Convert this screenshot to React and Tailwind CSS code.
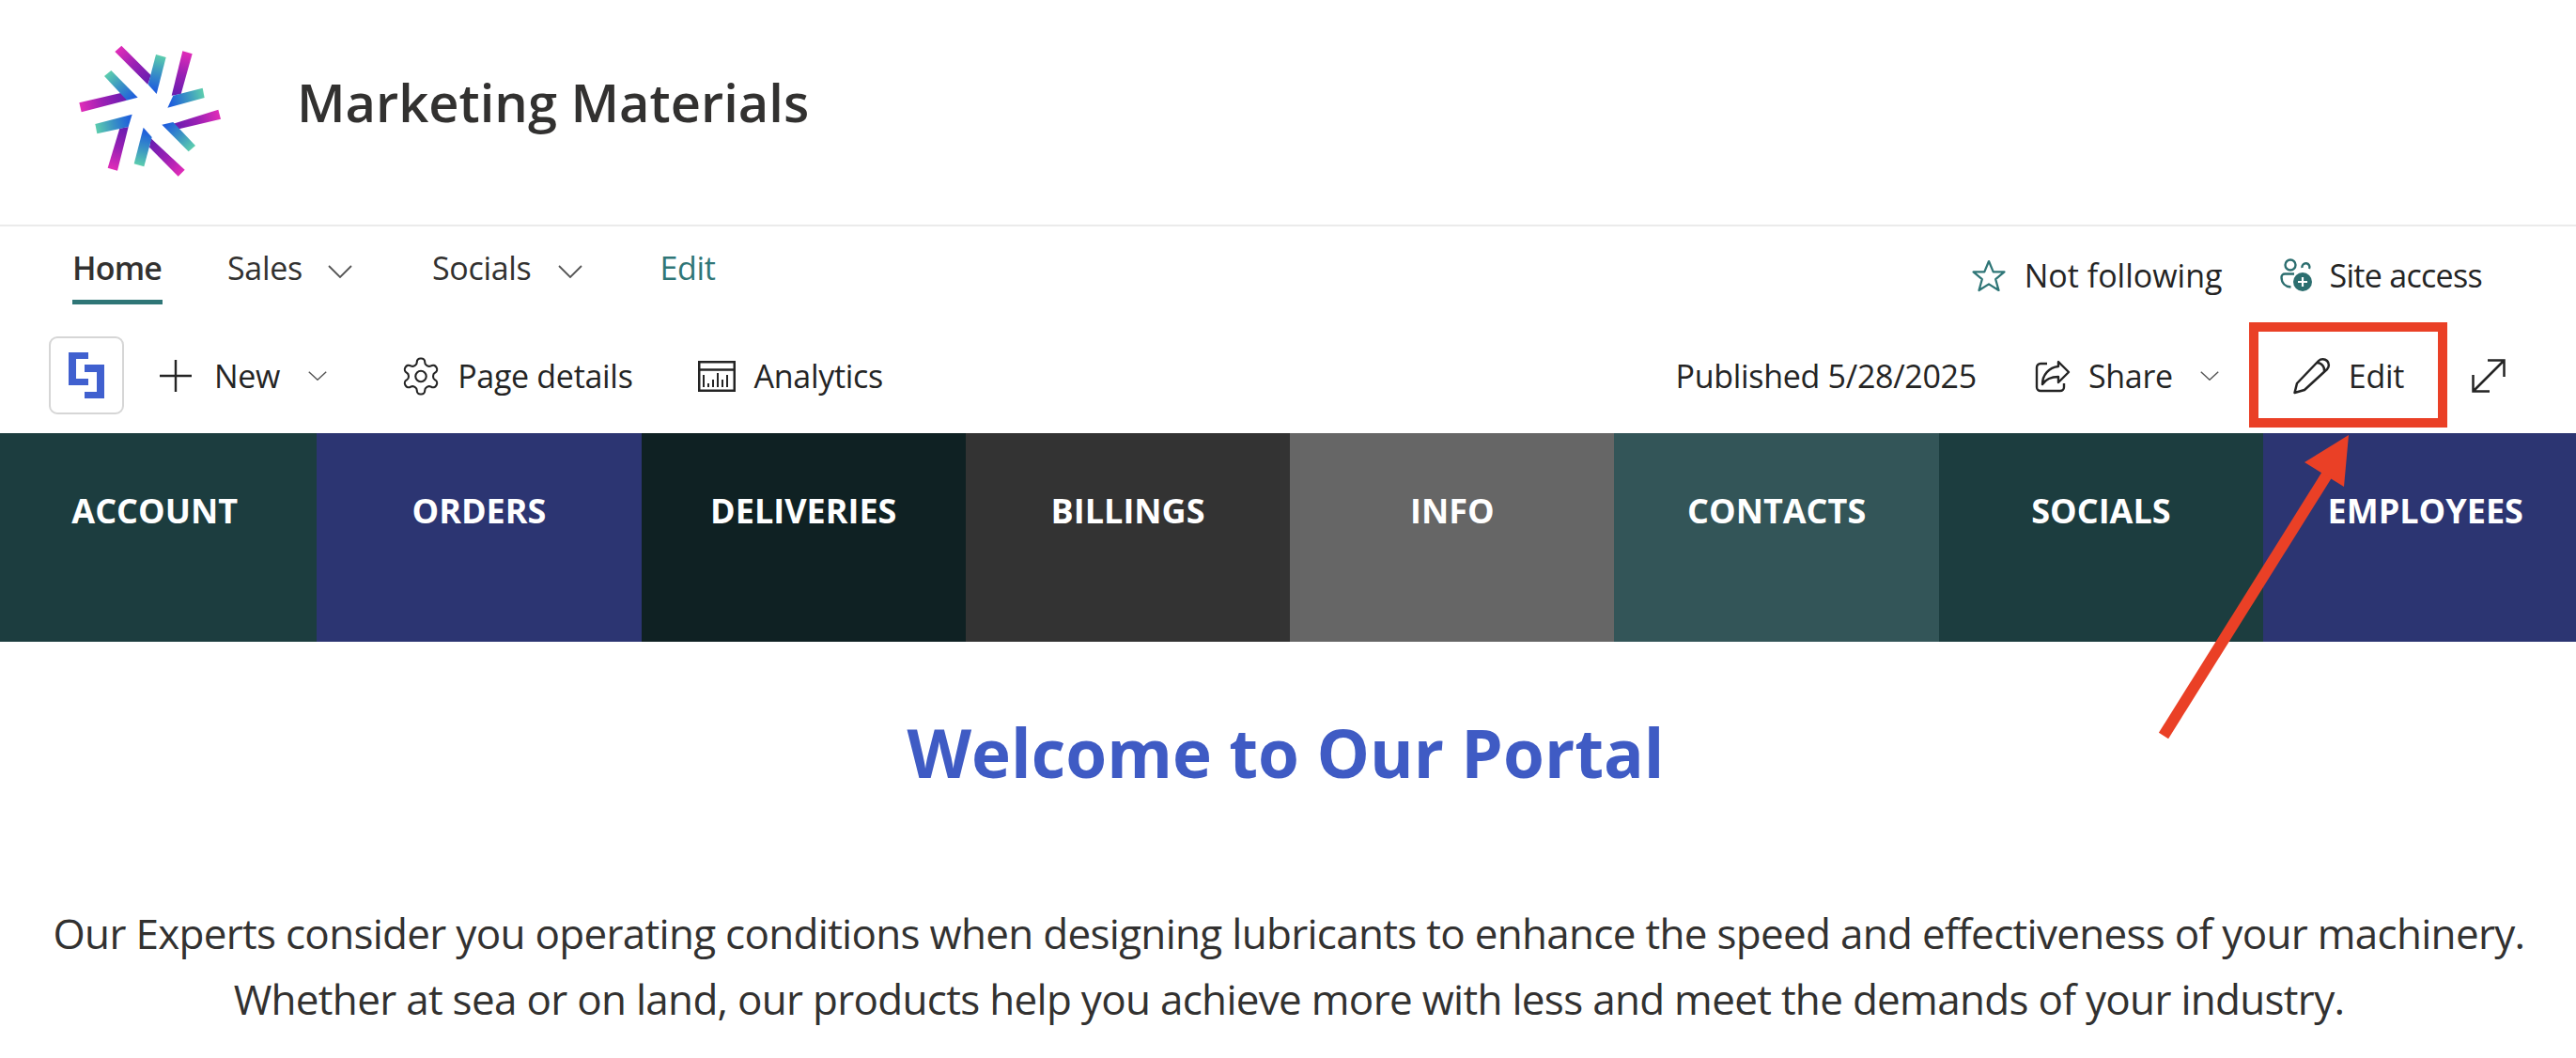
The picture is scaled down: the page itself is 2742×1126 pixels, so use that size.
import React from "react";

const bars = [
  ["a", [[247,105],[268,86],[362,180],[352,210]]],
  ["a", [[463,103],[494,112],[458,240],[428,245]]],
  ["a", [[577,290],[585,320],[445,353],[433,335]]],
  ["a", [[470,482],[449,503],[357,410],[362,382]]],
  ["a", [[224,476],[255,485],[290,345],[262,350]]],
  ["a", [[133,268],[140,298],[285,260],[275,235]]],
  ["b", [[378,114],[410,123],[380,240],[353,210]]],
  ["b", [[527,221],[533,252],[415,284],[433,245]]],
  ["b", [[504,405],[482,424],[397,338],[433,330]]],
  ["b", [[340,472],[308,463],[338,347],[365,378]]],
  ["b", [[190,367],[184,336],[302,305],[290,345]]],
  ["b", [[213,183],[235,165],[320,251],[285,260]]],
];

function Logo() {
  return (
    <svg width="200" height="190" viewBox="0 0 600 570">
      <defs>
        {bars.map(([k, p], i) => (
          <linearGradient key={i} id={`g${i}`} gradientUnits="userSpaceOnUse"
            x1={(p[0][0] + p[1][0]) / 2} y1={(p[0][1] + p[1][1]) / 2}
            x2={(p[2][0] + p[3][0]) / 2} y2={(p[2][1] + p[3][1]) / 2}>
            <stop offset="0" stopColor={k === "a" ? "#e02cb8" : "#5ccdae"} />
            <stop offset="0.5" stopColor={k === "a" ? "#9a20b4" : "#3a93c4"} />
            <stop offset="1" stopColor={k === "a" ? "#6a1db0" : "#1f5fdc"} />
          </linearGradient>
        ))}
      </defs>
      {bars.map(([k, p], i) => (
        <polygon key={i} points={p.map((q) => q.join(",")).join(" ")} fill={`url(#g${i})`} />
      ))}
    </svg>
  );
}

const Chevron = ({ w = 26, h = 14, c = "#555" }) => (
  <svg width={w} height={h} viewBox="0 0 26 14" fill="none" stroke={c} strokeWidth="1.8" preserveAspectRatio="none">
    <path d="M1 1l12 12L25 1" />
  </svg>
);

const Star = () => (
  <svg width="38" height="35" viewBox="0 0 36 34" fill="none" stroke="#2f7677" strokeWidth="2.2" strokeLinejoin="round">
    <path d="M18 2l4.600 11h11.400l-9 7.600 3.200 11.400L18 25.600 7.800 32 11 20.600 2 13h11.400z" />
  </svg>
);

const SiteAccess = () => (
  <svg width="38" height="36" viewBox="0 0 38 36" fill="none" stroke="#2c6e6f" strokeWidth="2.4">
    <circle cx="12" cy="7" r="5.500" />
    <path d="M24.500 10a4 4 0 1 1 7.500 1" />
    <path d="M16 16.500H6a3.500 3.500 0 0 0-3.500 3.500c0 6 4 10 10 10.500" />
    <circle cx="25" cy="25" r="10" fill="#2c6e6f" stroke="none" />
    <path d="M25 20v10M20 25h10" stroke="#fff" strokeWidth="2.2" />
  </svg>
);

const Plus = () => (
  <svg width="34" height="34" viewBox="0 0 34 34" stroke="#242424" strokeWidth="2.4">
    <path d="M17 0v34M0 17h34" />
  </svg>
);

const Gear = () => (
  <svg width="40" height="41" viewBox="1.500 1.500 21 21" fill="none" stroke="#242424" strokeWidth="1.1" strokeLinejoin="round">
    <path d="M12.220 2h-.44a2 2 0 0 0-2 2v.18a2 2 0 0 1-1 1.730l-.43.25a2 2 0 0 1-2 0l-.15-.08a2 2 0 0 0-2.730.73l-.22.38a2 2 0 0 0 .73 2.730l.15.1a2 2 0 0 1 1 1.720v.51a2 2 0 0 1-1 1.740l-.15.09a2 2 0 0 0-.73 2.730l.22.38a2 2 0 0 0 2.730.73l.15-.08a2 2 0 0 1 2 0l.43.25a2 2 0 0 1 1 1.730V20a2 2 0 0 0 2 2h.44a2 2 0 0 0 2-2v-.18a2 2 0 0 1 1-1.730l.43-.25a2 2 0 0 1 2 0l.15.08a2 2 0 0 0 2.730-.73l.22-.39a2 2 0 0 0-.73-2.730l-.15-.08a2 2 0 0 1-1-1.740v-.5a2 2 0 0 1 1-1.740l.15-.09a2 2 0 0 0 .73-2.730l-.22-.38a2 2 0 0 0-2.730-.73l-.15.08a2 2 0 0 1-2 0l-.43-.25a2 2 0 0 1-1-1.730V4a2 2 0 0 0-2-2z" />
    <circle cx="12" cy="12" r="3" />
  </svg>
);

const Analytics = () => (
  <svg width="40" height="33" viewBox="0 0 40 33" fill="none" stroke="#242424">
    <rect x="1.250" y="1.250" width="37.500" height="30.500" strokeWidth="2.500" />
    <path d="M1 9.500h38" strokeWidth="2.500" />
    <path d="M6 28V15M11 28v-4M16 28v-8M21 28V13M26 28v-8M31 28V15" strokeWidth="2" />
  </svg>
);

const Share = () => (
  <svg width="38" height="38" viewBox="0 0 38 38" fill="none" stroke="#242424" strokeWidth="2.4" strokeLinejoin="round">
    <path d="M13 6H6a4 4 0 0 0-4 4v21a4 4 0 0 0 4 4h21a4 4 0 0 0 4-4v-4" />
    <path d="M25 4v5C15 10 8 18 8 28c4-6 10-8 17-8v6l11-11z" />
  </svg>
);

const Pencil = () => (
  <svg width="42" height="40" viewBox="0 0 42 40" fill="none" stroke="#242424" strokeWidth="2.500" strokeLinejoin="round">
    <path d="M1.500 38L4 28 27 4a6 6 0 0 1 9 9L12 35z" />
    <path d="M25 6a8 8 0 0 1 8 9" />
  </svg>
);

const Expand = () => (
  <svg width="36" height="36" viewBox="0 0 36 36" fill="none" stroke="#242424" strokeWidth="2.500">
    <path d="M17 1.500h17.500V19M34.500 1.500l-33 33M1.500 17v17.500H19" />
  </svg>
);

const Tile = () => (
  <div className="w-[80px] h-[83px] rounded-[9px] border-2 border-[#d6d6d6] flex items-center justify-center">
    <svg width="38" height="49" viewBox="0 0 38 49" fill="#4060cf">
      <path d="M0 0h21v7H8v21h13v7H0zM17 13h21v36H17v-7h13V21H17z" />
    </svg>
  </div>
);

const tabs = [
  ["ACCOUNT", "bg-[#1c3d3f]"],
  ["ORDERS", "bg-[#2c3572]"],
  ["DELIVERIES", "bg-[#0f2123]"],
  ["BILLINGS", "bg-[#333333]"],
  ["INFO", "bg-[#666666]"],
  ["CONTACTS", "bg-[#335558]"],
  ["SOCIALS", "bg-[#1c3d3f]"],
  ["EMPLOYEES", "bg-[#2c3572]"],
];

export default function App() {
  return (
    <div className="relative w-[2742px] h-[1126px] overflow-hidden bg-white text-[#242424] font-['Open_Sans',sans-serif]">
      <header className="h-[241px] border-b-2 border-[#ebebeb] flex items-start">
        <div className="ml-[40px] mt-[20px]"><Logo /></div>
        <h1 className="ml-[76px] mt-[68px] text-[56px] leading-[80px] font-semibold text-[#323130]">Marketing Materials</h1>
      </header>

      <nav className="h-[118px] flex items-start text-[34px] tracking-[-0.3px] text-[#323130]">
        <div className="ml-[77px] w-[96px] mt-[19px] h-[64px] border-b-[5px] border-[#2f7677] font-semibold leading-[50px] tracking-[-0.8px] whitespace-nowrap">Home</div>
        <div className="ml-[69px] mt-[19px] leading-[50px]">Sales</div>
        <div className="ml-[27px] mt-[41px]"><Chevron /></div>
        <div className="ml-[85px] mt-[19px] leading-[50px]">Socials</div>
        <div className="ml-[29px] mt-[41px]"><Chevron /></div>
        <div className="ml-[82px] mt-[19px] leading-[50px] text-[#2f7677]">Edit</div>
        <div className="ml-auto mt-[27px] flex items-center leading-[50px] text-[#242424]">
          <Star />
          <span className="ml-[19px] tracking-normal">Not following</span>
          <span className="ml-[61px]"><SiteAccess /></span>
          <span className="ml-[15px] mr-[100px] tracking-[-0.7px]">Site access</span>
        </div>
      </nav>

      <div className="h-[102px] flex items-start text-[34px] tracking-[-0.3px]">
        <div className="ml-[52px] mt-[-1px]"><Tile /></div>
        <div className="ml-[38px] mt-[1px] flex items-center h-[80px]">
          <Plus />
          <span className="ml-[24px]">New</span>
          <span className="ml-[30px]"><Chevron w={20} h={10} /></span>
          <span className="ml-[80px]"><Gear /></span>
          <span className="ml-[19px]">Page details</span>
          <span className="ml-[69px]"><Analytics /></span>
          <span className="ml-[20px]">Analytics</span>
        </div>
        <div className="ml-auto mt-[1px] flex items-center h-[80px] mr-[75px]">
          <span>Published 5/28/2025</span>
          <span className="ml-[62px]"><Share /></span>
          <span className="ml-[19px]">Share</span>
          <span className="ml-[29px]"><Chevron w={20} h={10} /></span>
          <span className="ml-[79px]"><Pencil /></span>
          <span className="ml-[17px]">Edit</span>
          <span className="ml-[72px]"><Expand /></span>
        </div>
      </div>

      <div className="h-[222px] flex ml-[-8px] w-[2764px]">
        {tabs.map(([t, c]) => (
          <div key={t} className={`w-[345.300px] shrink-0 ${c} flex justify-center pt-[58px] text-white text-[36px] leading-[50px] font-bold`}>{t}</div>
        ))}
      </div>

      <h2 className="mt-[75px] pr-[5px] text-center text-[#3f5bc4] text-[71px] leading-[86px] font-bold">Welcome to Our Portal</h2>

      <p className="mt-[114px] pl-[2px] text-center text-[#323130] text-[44px] leading-[70px] tracking-[-0.7px]">
        Our Experts consider you operating conditions when designing lubricants to enhance the speed and effectiveness of your machinery.<br />
        Whether at sea or on land, our products help you achieve more with less and meet the demands of your industry.
      </p>

      <div className="absolute left-[2394px] top-[343px] w-[211px] h-[112px] border-[10px] border-[#ea4026]" />
      <svg className="absolute left-0 top-0 pointer-events-none" width="2742" height="1126">
        <path d="M2303 783L2477 505" stroke="#ea4026" strokeWidth="12" />
        <polygon points="2500,463 2453,492 2495,518" fill="#ea4026" />
      </svg>
    </div>
  );
}
